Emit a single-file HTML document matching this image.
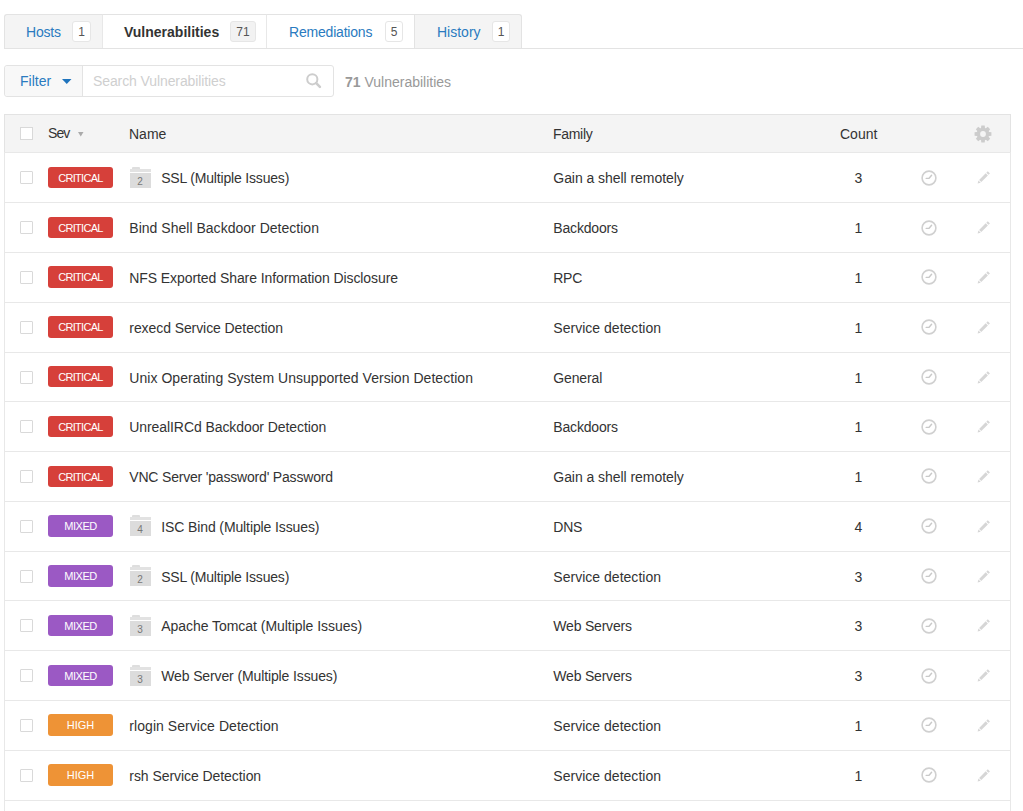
<!DOCTYPE html>
<html><head><meta charset="utf-8">
<style>
html,body{margin:0;padding:0;background:#fff;width:1023px;height:811px;overflow:hidden;position:relative;}
body{font-family:"Liberation Sans",sans-serif;font-size:14px;color:#333;}
.abs{position:absolute;}
/* tabs */
.tabline{position:absolute;left:4px;right:0;top:48px;height:1px;background:#e3e3e3;}
.tab{position:absolute;top:14px;height:34px;box-sizing:border-box;border-top:1px solid #e3e3e3;}
.tab .t{position:absolute;top:7px;line-height:20px;white-space:nowrap;color:#2a7bc0;}
.tab .b{position:absolute;top:5.5px;height:21px;box-sizing:border-box;border:1px solid #e6e6e6;border-radius:3px;background:#fff;font-size:12px;line-height:19px;padding-top:1px;text-align:center;color:#555;}
/* filter */
.fgroup{position:absolute;left:4px;top:65px;width:330px;height:32px;box-sizing:border-box;border:1px solid #e3e3e3;border-radius:3px;background:#fff;}
.fbtn{position:absolute;left:0;top:0;width:77px;height:30px;background:#f8f8f8;border-right:1px solid #e3e3e3;border-radius:3px 0 0 3px;}
/* table */
.thead{position:absolute;left:4px;top:114px;width:1007px;height:39px;box-sizing:border-box;border:1px solid #e3e3e3;background:#f4f4f4;}
.vl{position:absolute;top:152px;height:700px;width:1px;background:#e8e8e8;}
.row{position:absolute;left:0;width:1023px;height:50px;}
.hl{left:4px;top:0;width:1007px;height:1px;background:#e8e8e8;}
.row > *{position:absolute;}
.cb{left:20px;top:19px;width:13px;height:13px;box-sizing:border-box;border:1px solid #d9d9d9;border-radius:1px;background:#fff;}
.sev{left:48px;top:14.5px;width:65px;height:21.4px;border-radius:3px;color:#fff;font-size:11px;line-height:22.5px;text-align:center;}
.nm{left:129.3px;top:18px;line-height:16px;white-space:nowrap;}
.fam{left:553.3px;top:18px;line-height:16px;white-space:nowrap;}
.cnt{left:840px;width:37px;text-align:center;top:18px;line-height:16px;}
.clk{left:921px;top:17.4px;}
.pen{left:976px;top:17px;}
.fold{left:129.5px;top:14.5px;width:21px;height:21px;}
.fold div{position:absolute;}
.ftab{left:2px;top:0;width:8px;height:3px;background:#dedede;border-radius:1px 1px 0 0;}
.fband{left:0;top:2px;width:21px;height:3px;background:#e2e2e2;}
.fbody{left:0;top:6px;width:21px;height:15px;background:#dcdcdc;font-size:10px;line-height:17px;text-align:center;color:#777;}
</style></head><body>
<div class="tabline"></div>
<div class="tab" style="left:4px;width:99px;background:#f4f4f4;border-left:1px solid #e3e3e3;border-radius:3px 0 0 0;">
  <span class="t" style="left:21px;letter-spacing:-0.2px">Hosts</span><span class="b" style="left:67px;width:19px">1</span>
</div>
<div class="tab" style="left:102px;width:165px;background:#fff;border-left:1px solid #e8e8e8;">
  <span class="t" style="left:21px;color:#333;font-weight:bold">Vulnerabilities</span><span class="b" style="left:127px;width:26px;background:#f2f2f2">71</span>
</div>
<div class="tab" style="left:266px;width:149px;background:#fff;border-left:1px solid #e8e8e8;">
  <span class="t" style="left:22px;letter-spacing:-0.2px">Remediations</span><span class="b" style="left:118px;width:18px">5</span>
</div>
<div class="tab" style="left:414px;width:108px;background:#f4f4f4;border-left:1px solid #e3e3e3;border-right:1px solid #e3e3e3;border-radius:0 3px 0 0;">
  <span class="t" style="left:22px">History</span><span class="b" style="left:77px;width:18px">1</span>
</div>

<div class="fgroup"><div class="fbtn"></div>
  <span class="abs" style="left:15px;top:7px;line-height:16px;color:#2a7bc0;letter-spacing:0px">Filter</span>
  <svg class="abs" style="left:57px;top:13px" width="10" height="6" viewBox="0 0 10 6"><path d="M0 0 L9.5 0 L4.75 5 Z" fill="#1f74bd"/></svg>
  <span class="abs" style="left:88px;top:7px;line-height:16px;color:#cfcfcf;letter-spacing:-0.1px">Search Vulnerabilities</span>
  <svg class="abs" style="left:300px;top:6px" width="18" height="18" viewBox="0 0 18 18"><circle cx="7.3" cy="7.3" r="5.1" fill="none" stroke="#cdcdcd" stroke-width="2"/><path d="M11.2 11.2 L14.9 14.9" stroke="#cdcdcd" stroke-width="2.6" stroke-linecap="round"/></svg>
</div>
<span class="abs" style="left:345px;top:74px;line-height:16px;color:#999;white-space:nowrap"><b>71</b> Vulnerabilities</span>

<div class="thead">
  <div class="abs" style="left:15px;top:12px;width:13px;height:13px;box-sizing:border-box;border:1px solid #d9d9d9;background:#fff"></div>
  <span class="abs" style="left:43px;top:9.8px;line-height:16px;letter-spacing:-0.9px">Sev</span>
  <svg class="abs" style="left:73px;top:17px" width="6" height="5" viewBox="0 0 6 5"><path d="M0 0 L5.5 0 L2.75 4.5 Z" fill="#aaa"/></svg>
  <span class="abs" style="left:124px;top:11px;line-height:16px">Name</span>
  <span class="abs" style="left:548px;top:11px;line-height:16px;letter-spacing:-0.3px">Family</span>
  <span class="abs" style="left:835px;top:11px;line-height:16px">Count</span>
  <svg class="abs" style="left:969px;top:10px" width="18" height="18" viewBox="0 0 18 18"><g fill="#cccccc"><circle cx="9" cy="9" r="6.3"/><path d="M7.3 0.6 L10.7 0.6 L11.2 4.5 L6.8 4.5 Z" transform="rotate(0 9 9)"/><path d="M7.3 0.6 L10.7 0.6 L11.2 4.5 L6.8 4.5 Z" transform="rotate(45 9 9)"/><path d="M7.3 0.6 L10.7 0.6 L11.2 4.5 L6.8 4.5 Z" transform="rotate(90 9 9)"/><path d="M7.3 0.6 L10.7 0.6 L11.2 4.5 L6.8 4.5 Z" transform="rotate(135 9 9)"/><path d="M7.3 0.6 L10.7 0.6 L11.2 4.5 L6.8 4.5 Z" transform="rotate(180 9 9)"/><path d="M7.3 0.6 L10.7 0.6 L11.2 4.5 L6.8 4.5 Z" transform="rotate(225 9 9)"/><path d="M7.3 0.6 L10.7 0.6 L11.2 4.5 L6.8 4.5 Z" transform="rotate(270 9 9)"/><path d="M7.3 0.6 L10.7 0.6 L11.2 4.5 L6.8 4.5 Z" transform="rotate(315 9 9)"/></g><circle cx="9" cy="9" r="2.9" fill="#f4f4f4"/></svg>
</div>

<div class="row" style="top:152.40px"><div class="hl"></div><div class="cb"></div><div class="sev" style="background:#d6403a;letter-spacing:-0.7px">CRITICAL</div><div class="fold"><div class="ftab"></div><div class="fband"></div><div class="fbody">2</div></div><div class="nm" style="left:161.2px;letter-spacing:-0.18px">SSL (Multiple Issues)</div><div class="fam" style="letter-spacing:-0.05px">Gain a shell remotely</div><div class="cnt">3</div><svg class="clk" width="16" height="16" viewBox="0 0 16 16"><circle cx="8" cy="8" r="6.9" fill="none" stroke="#d0d0d0" stroke-width="1.6"/><path d="M8.1 8.2 L5.2 8.4 M8.1 8.2 L10.6 5.2" stroke="#c9c9c9" stroke-width="1.4" fill="none" stroke-linecap="round"/></svg><svg class="pen" width="16" height="16" viewBox="0 0 16 16"><g fill="#d6d6d6"><path d="M1.60 14.60 L2.48 11.52 L4.68 13.72 Z"/><path d="M3.12 10.89 L9.70 4.31 L11.89 6.50 L5.31 13.08 Z"/><path d="M10.33 3.68 L11.75 2.26 L13.94 4.45 L12.52 5.87 Z"/></g></svg></div>
<div class="row" style="top:202.18px"><div class="hl"></div><div class="cb"></div><div class="sev" style="background:#d6403a;letter-spacing:-0.7px">CRITICAL</div><div class="nm" style="letter-spacing:0.02px">Bind Shell Backdoor Detection</div><div class="fam" style="letter-spacing:-0.17px">Backdoors</div><div class="cnt">1</div><svg class="clk" width="16" height="16" viewBox="0 0 16 16"><circle cx="8" cy="8" r="6.9" fill="none" stroke="#d0d0d0" stroke-width="1.6"/><path d="M8.1 8.2 L5.2 8.4 M8.1 8.2 L10.6 5.2" stroke="#c9c9c9" stroke-width="1.4" fill="none" stroke-linecap="round"/></svg><svg class="pen" width="16" height="16" viewBox="0 0 16 16"><g fill="#d6d6d6"><path d="M1.60 14.60 L2.48 11.52 L4.68 13.72 Z"/><path d="M3.12 10.89 L9.70 4.31 L11.89 6.50 L5.31 13.08 Z"/><path d="M10.33 3.68 L11.75 2.26 L13.94 4.45 L12.52 5.87 Z"/></g></svg></div>
<div class="row" style="top:251.96px"><div class="hl"></div><div class="cb"></div><div class="sev" style="background:#d6403a;letter-spacing:-0.7px">CRITICAL</div><div class="nm" style="letter-spacing:-0.09px">NFS Exported Share Information Disclosure</div><div class="fam" style="letter-spacing:-0.3px">RPC</div><div class="cnt">1</div><svg class="clk" width="16" height="16" viewBox="0 0 16 16"><circle cx="8" cy="8" r="6.9" fill="none" stroke="#d0d0d0" stroke-width="1.6"/><path d="M8.1 8.2 L5.2 8.4 M8.1 8.2 L10.6 5.2" stroke="#c9c9c9" stroke-width="1.4" fill="none" stroke-linecap="round"/></svg><svg class="pen" width="16" height="16" viewBox="0 0 16 16"><g fill="#d6d6d6"><path d="M1.60 14.60 L2.48 11.52 L4.68 13.72 Z"/><path d="M3.12 10.89 L9.70 4.31 L11.89 6.50 L5.31 13.08 Z"/><path d="M10.33 3.68 L11.75 2.26 L13.94 4.45 L12.52 5.87 Z"/></g></svg></div>
<div class="row" style="top:301.74px"><div class="hl"></div><div class="cb"></div><div class="sev" style="background:#d6403a;letter-spacing:-0.7px">CRITICAL</div><div class="nm" style="letter-spacing:-0.08px">rexecd Service Detection</div><div class="fam" style="letter-spacing:0.02px">Service detection</div><div class="cnt">1</div><svg class="clk" width="16" height="16" viewBox="0 0 16 16"><circle cx="8" cy="8" r="6.9" fill="none" stroke="#d0d0d0" stroke-width="1.6"/><path d="M8.1 8.2 L5.2 8.4 M8.1 8.2 L10.6 5.2" stroke="#c9c9c9" stroke-width="1.4" fill="none" stroke-linecap="round"/></svg><svg class="pen" width="16" height="16" viewBox="0 0 16 16"><g fill="#d6d6d6"><path d="M1.60 14.60 L2.48 11.52 L4.68 13.72 Z"/><path d="M3.12 10.89 L9.70 4.31 L11.89 6.50 L5.31 13.08 Z"/><path d="M10.33 3.68 L11.75 2.26 L13.94 4.45 L12.52 5.87 Z"/></g></svg></div>
<div class="row" style="top:351.52px"><div class="hl"></div><div class="cb"></div><div class="sev" style="background:#d6403a;letter-spacing:-0.7px">CRITICAL</div><div class="nm" style="letter-spacing:0.04px">Unix Operating System Unsupported Version Detection</div><div class="fam" style="letter-spacing:-0.13px">General</div><div class="cnt">1</div><svg class="clk" width="16" height="16" viewBox="0 0 16 16"><circle cx="8" cy="8" r="6.9" fill="none" stroke="#d0d0d0" stroke-width="1.6"/><path d="M8.1 8.2 L5.2 8.4 M8.1 8.2 L10.6 5.2" stroke="#c9c9c9" stroke-width="1.4" fill="none" stroke-linecap="round"/></svg><svg class="pen" width="16" height="16" viewBox="0 0 16 16"><g fill="#d6d6d6"><path d="M1.60 14.60 L2.48 11.52 L4.68 13.72 Z"/><path d="M3.12 10.89 L9.70 4.31 L11.89 6.50 L5.31 13.08 Z"/><path d="M10.33 3.68 L11.75 2.26 L13.94 4.45 L12.52 5.87 Z"/></g></svg></div>
<div class="row" style="top:401.30px"><div class="hl"></div><div class="cb"></div><div class="sev" style="background:#d6403a;letter-spacing:-0.7px">CRITICAL</div><div class="nm" style="letter-spacing:-0.08px">UnrealIRCd Backdoor Detection</div><div class="fam" style="letter-spacing:-0.17px">Backdoors</div><div class="cnt">1</div><svg class="clk" width="16" height="16" viewBox="0 0 16 16"><circle cx="8" cy="8" r="6.9" fill="none" stroke="#d0d0d0" stroke-width="1.6"/><path d="M8.1 8.2 L5.2 8.4 M8.1 8.2 L10.6 5.2" stroke="#c9c9c9" stroke-width="1.4" fill="none" stroke-linecap="round"/></svg><svg class="pen" width="16" height="16" viewBox="0 0 16 16"><g fill="#d6d6d6"><path d="M1.60 14.60 L2.48 11.52 L4.68 13.72 Z"/><path d="M3.12 10.89 L9.70 4.31 L11.89 6.50 L5.31 13.08 Z"/><path d="M10.33 3.68 L11.75 2.26 L13.94 4.45 L12.52 5.87 Z"/></g></svg></div>
<div class="row" style="top:451.08px"><div class="hl"></div><div class="cb"></div><div class="sev" style="background:#d6403a;letter-spacing:-0.7px">CRITICAL</div><div class="nm" style="letter-spacing:-0.19px">VNC Server 'password' Password</div><div class="fam" style="letter-spacing:-0.05px">Gain a shell remotely</div><div class="cnt">1</div><svg class="clk" width="16" height="16" viewBox="0 0 16 16"><circle cx="8" cy="8" r="6.9" fill="none" stroke="#d0d0d0" stroke-width="1.6"/><path d="M8.1 8.2 L5.2 8.4 M8.1 8.2 L10.6 5.2" stroke="#c9c9c9" stroke-width="1.4" fill="none" stroke-linecap="round"/></svg><svg class="pen" width="16" height="16" viewBox="0 0 16 16"><g fill="#d6d6d6"><path d="M1.60 14.60 L2.48 11.52 L4.68 13.72 Z"/><path d="M3.12 10.89 L9.70 4.31 L11.89 6.50 L5.31 13.08 Z"/><path d="M10.33 3.68 L11.75 2.26 L13.94 4.45 L12.52 5.87 Z"/></g></svg></div>
<div class="row" style="top:500.86px"><div class="hl"></div><div class="cb"></div><div class="sev" style="background:#9b59c4;letter-spacing:-0.5px">MIXED</div><div class="fold"><div class="ftab"></div><div class="fband"></div><div class="fbody">4</div></div><div class="nm" style="left:161.2px;letter-spacing:-0.11px">ISC Bind (Multiple Issues)</div><div class="fam" style="letter-spacing:-0.2px">DNS</div><div class="cnt">4</div><svg class="clk" width="16" height="16" viewBox="0 0 16 16"><circle cx="8" cy="8" r="6.9" fill="none" stroke="#d0d0d0" stroke-width="1.6"/><path d="M8.1 8.2 L5.2 8.4 M8.1 8.2 L10.6 5.2" stroke="#c9c9c9" stroke-width="1.4" fill="none" stroke-linecap="round"/></svg><svg class="pen" width="16" height="16" viewBox="0 0 16 16"><g fill="#d6d6d6"><path d="M1.60 14.60 L2.48 11.52 L4.68 13.72 Z"/><path d="M3.12 10.89 L9.70 4.31 L11.89 6.50 L5.31 13.08 Z"/><path d="M10.33 3.68 L11.75 2.26 L13.94 4.45 L12.52 5.87 Z"/></g></svg></div>
<div class="row" style="top:550.64px"><div class="hl"></div><div class="cb"></div><div class="sev" style="background:#9b59c4;letter-spacing:-0.5px">MIXED</div><div class="fold"><div class="ftab"></div><div class="fband"></div><div class="fbody">2</div></div><div class="nm" style="left:161.2px;letter-spacing:-0.18px">SSL (Multiple Issues)</div><div class="fam" style="letter-spacing:0.02px">Service detection</div><div class="cnt">3</div><svg class="clk" width="16" height="16" viewBox="0 0 16 16"><circle cx="8" cy="8" r="6.9" fill="none" stroke="#d0d0d0" stroke-width="1.6"/><path d="M8.1 8.2 L5.2 8.4 M8.1 8.2 L10.6 5.2" stroke="#c9c9c9" stroke-width="1.4" fill="none" stroke-linecap="round"/></svg><svg class="pen" width="16" height="16" viewBox="0 0 16 16"><g fill="#d6d6d6"><path d="M1.60 14.60 L2.48 11.52 L4.68 13.72 Z"/><path d="M3.12 10.89 L9.70 4.31 L11.89 6.50 L5.31 13.08 Z"/><path d="M10.33 3.68 L11.75 2.26 L13.94 4.45 L12.52 5.87 Z"/></g></svg></div>
<div class="row" style="top:600.42px"><div class="hl"></div><div class="cb"></div><div class="sev" style="background:#9b59c4;letter-spacing:-0.5px">MIXED</div><div class="fold"><div class="ftab"></div><div class="fband"></div><div class="fbody">3</div></div><div class="nm" style="left:161.2px;letter-spacing:-0.04px">Apache Tomcat (Multiple Issues)</div><div class="fam" style="letter-spacing:-0.2px">Web Servers</div><div class="cnt">3</div><svg class="clk" width="16" height="16" viewBox="0 0 16 16"><circle cx="8" cy="8" r="6.9" fill="none" stroke="#d0d0d0" stroke-width="1.6"/><path d="M8.1 8.2 L5.2 8.4 M8.1 8.2 L10.6 5.2" stroke="#c9c9c9" stroke-width="1.4" fill="none" stroke-linecap="round"/></svg><svg class="pen" width="16" height="16" viewBox="0 0 16 16"><g fill="#d6d6d6"><path d="M1.60 14.60 L2.48 11.52 L4.68 13.72 Z"/><path d="M3.12 10.89 L9.70 4.31 L11.89 6.50 L5.31 13.08 Z"/><path d="M10.33 3.68 L11.75 2.26 L13.94 4.45 L12.52 5.87 Z"/></g></svg></div>
<div class="row" style="top:650.20px"><div class="hl"></div><div class="cb"></div><div class="sev" style="background:#9b59c4;letter-spacing:-0.5px">MIXED</div><div class="fold"><div class="ftab"></div><div class="fband"></div><div class="fbody">3</div></div><div class="nm" style="left:161.2px;letter-spacing:-0.12px">Web Server (Multiple Issues)</div><div class="fam" style="letter-spacing:-0.2px">Web Servers</div><div class="cnt">3</div><svg class="clk" width="16" height="16" viewBox="0 0 16 16"><circle cx="8" cy="8" r="6.9" fill="none" stroke="#d0d0d0" stroke-width="1.6"/><path d="M8.1 8.2 L5.2 8.4 M8.1 8.2 L10.6 5.2" stroke="#c9c9c9" stroke-width="1.4" fill="none" stroke-linecap="round"/></svg><svg class="pen" width="16" height="16" viewBox="0 0 16 16"><g fill="#d6d6d6"><path d="M1.60 14.60 L2.48 11.52 L4.68 13.72 Z"/><path d="M3.12 10.89 L9.70 4.31 L11.89 6.50 L5.31 13.08 Z"/><path d="M10.33 3.68 L11.75 2.26 L13.94 4.45 L12.52 5.87 Z"/></g></svg></div>
<div class="row" style="top:699.98px"><div class="hl"></div><div class="cb"></div><div class="sev" style="background:#ee9336;letter-spacing:0px">HIGH</div><div class="nm" style="letter-spacing:0.06px">rlogin Service Detection</div><div class="fam" style="letter-spacing:0.02px">Service detection</div><div class="cnt">1</div><svg class="clk" width="16" height="16" viewBox="0 0 16 16"><circle cx="8" cy="8" r="6.9" fill="none" stroke="#d0d0d0" stroke-width="1.6"/><path d="M8.1 8.2 L5.2 8.4 M8.1 8.2 L10.6 5.2" stroke="#c9c9c9" stroke-width="1.4" fill="none" stroke-linecap="round"/></svg><svg class="pen" width="16" height="16" viewBox="0 0 16 16"><g fill="#d6d6d6"><path d="M1.60 14.60 L2.48 11.52 L4.68 13.72 Z"/><path d="M3.12 10.89 L9.70 4.31 L11.89 6.50 L5.31 13.08 Z"/><path d="M10.33 3.68 L11.75 2.26 L13.94 4.45 L12.52 5.87 Z"/></g></svg></div>
<div class="row" style="top:749.76px"><div class="hl"></div><div class="cb"></div><div class="sev" style="background:#ee9336;letter-spacing:0px">HIGH</div><div class="nm" style="letter-spacing:-0.06px">rsh Service Detection</div><div class="fam" style="letter-spacing:0.02px">Service detection</div><div class="cnt">1</div><svg class="clk" width="16" height="16" viewBox="0 0 16 16"><circle cx="8" cy="8" r="6.9" fill="none" stroke="#d0d0d0" stroke-width="1.6"/><path d="M8.1 8.2 L5.2 8.4 M8.1 8.2 L10.6 5.2" stroke="#c9c9c9" stroke-width="1.4" fill="none" stroke-linecap="round"/></svg><svg class="pen" width="16" height="16" viewBox="0 0 16 16"><g fill="#d6d6d6"><path d="M1.60 14.60 L2.48 11.52 L4.68 13.72 Z"/><path d="M3.12 10.89 L9.70 4.31 L11.89 6.50 L5.31 13.08 Z"/><path d="M10.33 3.68 L11.75 2.26 L13.94 4.45 L12.52 5.87 Z"/></g></svg></div>
<div class="row" style="top:799.54px"><div class="hl"></div></div>
<div class="vl" style="left:4px"></div><div class="vl" style="left:1010px"></div>
</body></html>
